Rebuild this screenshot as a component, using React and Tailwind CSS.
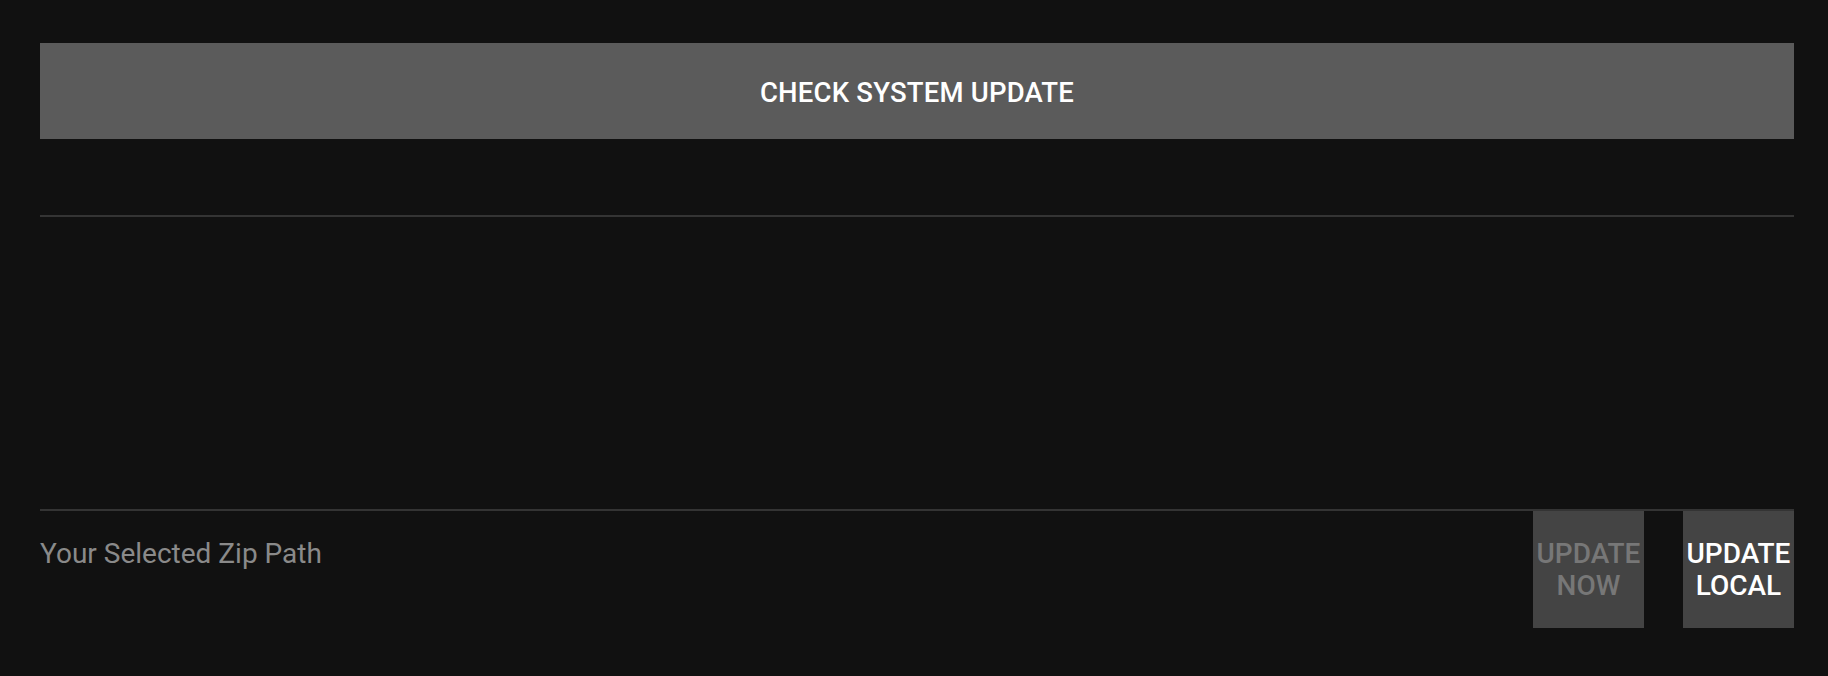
export default function App() {
  return (
    <div className="h-[676px] bg-[#111111] pt-[43px] pl-[40px] pr-[34px]" style={{ fontFamily: 'Roboto, "Noto Sans", sans-serif' }}>
      <button className="flex h-[96px] w-full items-center justify-center bg-[#5b5b5b] pt-[4px] text-[27.5px] font-medium uppercase tracking-[0.2px] text-white">
        Check System Update
      </button>

      <div className="mt-[76px] h-[2px] bg-[#343434]" />

      <div className="mt-[292px] h-[2px] bg-[#343434]" />

      <div className="flex items-start justify-between">
        <p className="pt-[26px] text-[28px] leading-[1.2] text-[#8a8a8a]">Your Selected Zip Path</p>
        <div className="flex gap-[39px]">
          <button disabled className="flex h-[117px] w-[111px] items-center justify-center bg-[#444444] text-[28px] font-medium leading-[32px] text-[#777777]">
            UPDATE
            <br />
            NOW
          </button>
          <button className="flex h-[117px] w-[111px] items-center justify-center bg-[#444444] text-[28px] font-medium leading-[32px] text-white">
            UPDATE
            <br />
            LOCAL
          </button>
        </div>
      </div>
    </div>
  );
}
